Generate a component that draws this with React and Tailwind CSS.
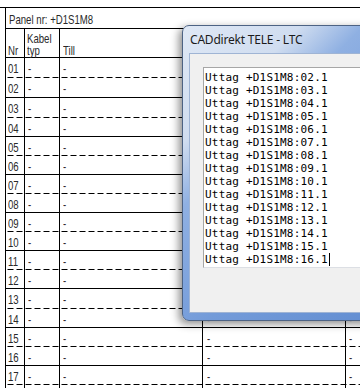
import React from "react";

const rows = [
  { n: "01", h: 20, dashed: true },
  { n: "02", h: 20, dashed: false },
  { n: "03", h: 20, dashed: true },
  { n: "04", h: 19, dashed: false },
  { n: "05", h: 19, dashed: true },
  { n: "06", h: 19, dashed: false },
  { n: "07", h: 19, dashed: true },
  { n: "08", h: 19, dashed: false },
  { n: "09", h: 19, dashed: true },
  { n: "10", h: 19, dashed: false },
  { n: "11", h: 19, dashed: true },
  { n: "12", h: 19, dashed: false },
  { n: "13", h: 20, dashed: true },
  { n: "14", h: 19, dashed: false },
  { n: "15", h: 19, dashed: true },
  { n: "16", h: 19, dashed: false },
  { n: "17", h: 19, dashed: true },
  { n: "18", h: 19, dashed: false },
];

const lines = [
  "02", "03", "04", "05", "06", "07", "08", "09", "10", "11", "12", "13", "14", "15", "16",
];

const cad = { fontFamily: '"Liberation Sans",Arial,sans-serif' };

function T({ children }) {
  return <span className="inline-block origin-left scale-x-[0.74] whitespace-pre">{children}</span>;
}

function Row({ r }) {
  const hc = r.h === 20 ? "h-[20px]" : "h-[19px]";
  const sep = r.dashed
    ? "bg-[linear-gradient(to_right,#000_0,#000_6px,transparent_6px,transparent_9px)] bg-[length:9px_1px] bg-repeat-x bg-bottom"
    : "border-b border-black";
  return (
    <div className={`flex ${hc} ${sep}`}>
      <div className="w-[19px] shrink-0 border-r border-black pl-[2px] pt-[5px] leading-[12px]"><T>{r.n}</T></div>
      <div className="w-[35px] shrink-0 border-r border-black pl-[3px] pt-[5px] leading-[12px]"><T>-</T></div>
      <div className="w-[143px] shrink-0 border-r border-black pl-[3px] pt-[5px] leading-[12px]"><T>-</T></div>
      <div className="w-[143px] shrink-0 border-r border-black pl-[4px] pt-[5px] leading-[12px]"><T>-</T></div>
      <div className="flex-1 pl-[3px] pt-[5px] leading-[12px]"><T>-</T></div>
    </div>
  );
}

export default function App() {
  return (
    <div className="relative w-[360px] h-[388px] overflow-hidden bg-white text-[13px] text-[#2a2a2a]" style={cad}>
      <div className="pt-[7px]">
        <div className="border-t border-black">
          <div className="ml-[5px] border-l border-black">
            <div className="h-[21px] border-b border-black pl-[3px] pt-[6px] leading-[12px]"><T>Panel nr: +D1S1M8</T></div>
            <div className="flex h-[29px] border-b border-black">
              <div className="w-[19px] shrink-0 border-r border-black pl-[2px] pt-[16px] leading-[12px]"><T>Nr</T></div>
              <div className="w-[35px] shrink-0 border-r border-black pl-[2px] pt-[4px] leading-[12px]">
                <div><T>Kabel</T></div>
                <div><T>typ</T></div>
              </div>
              <div className="w-[143px] shrink-0 border-r border-black pl-[3px] pt-[16px] leading-[12px]"><T>Till</T></div>
              <div className="w-[143px] shrink-0 border-r border-black"></div>
              <div className="flex-1"></div>
            </div>
            {rows.map((r) => (
              <Row key={r.n} r={r} />
            ))}
          </div>
        </div>
      </div>

      <div className="absolute left-[182px] top-[25px] w-[240px] h-[296px] rounded-[7px] border border-[#4d6384] shadow-[-3px_3px_9px_rgba(0,0,0,0.45)] bg-[linear-gradient(135deg,#dfe8f5_0%,#d0ddf0_22%,#8fb0e2_34%,#739bd9_60%,#5f8bd0_100%)]">
        <div
          className="h-[27px] flex items-center pl-[7px] pt-[1px] text-[12px] tracking-[-0.2px] leading-[16px] text-[#1b1b1b]"
          style={{ fontFamily: '"Noto Sans","Open Sans",sans-serif' }}
        >
          CADdirekt TELE - LTC
        </div>
        <div className="ml-[6px] h-[260px] border border-[#9fb4d4] bg-[#f0f0f0] pl-[13px] pt-[13px]">
          <div
            className="h-[201px] border border-[#a6a6a6] border-b-[#dcdfe4] bg-white pl-[1px] pt-[3px] text-[11px] tracking-[0.2px] leading-[13px] text-black"
            style={{ fontFamily: '"DejaVu Sans Mono","Liberation Mono",monospace' }}
          >
            {lines.map((l, i) => (
              <div key={l} className="whitespace-pre">
                Uttag +D1S1M8:{l}.1
                {i === lines.length - 1 && (
                  <span className="inline-block w-[1px] h-[13px] bg-black align-top ml-[1px]"></span>
                )}
              </div>
            ))}
          </div>
        </div>
      </div>
    </div>
  );
}
